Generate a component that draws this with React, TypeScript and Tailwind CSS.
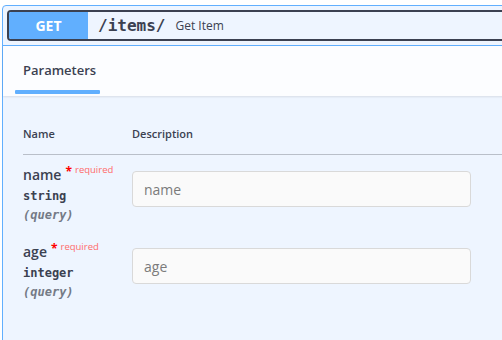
import React from "react";

const sans = { fontFamily: '"Open Sans", "Noto Sans", sans-serif' };

interface Param {
  name: string;
  type: string;
  where: string;
}

const params: Param[] = [
  { name: "name", type: "string", where: "query" },
  { name: "age", type: "integer", where: "query" },
];

function ParamRow({ p }: { p: Param }) {
  return (
    <div className="flex pt-[10px] h-[77px]">
      <div className="w-[109px] shrink-0">
        <div className="flex items-start h-[20px] leading-[20px]">
          <span className="text-[14px] font-semibold text-[#3b4151]">{p.name}</span>
          <span className="ml-[4px] text-[12px] leading-[14px] font-bold text-[#ff0000]">*</span>
          <span className="ml-[3px] text-[9.5px] leading-[12px] text-[#ff6b6b] -mt-[1px]">required</span>
        </div>
        <div className="mt-[4px] text-[12px] leading-[14px] font-bold text-[#3b4151] font-['DejaVu_Sans_Mono',monospace]">
          {p.type}
        </div>
        <div className="mt-[5px] text-[12px] leading-[14px] italic font-semibold text-[#747a86] font-['DejaVu_Sans_Mono',monospace]">
          ({p.where})
        </div>
      </div>
      <div className="pt-[6px]">
        <input
          placeholder={p.name}
          className="w-[339px] h-[36px] rounded-[4px] border border-[#d9d9d9] bg-[#fafafa] px-[11px] text-[14px] text-[#3b4151] placeholder:text-[#7b7b7b] outline-none"
          style={sans}
        />
      </div>
    </div>
  );
}

export default function App() {
  return (
    <div className="w-[502px] h-[340px] overflow-hidden bg-white pt-[5px] pl-[2px]" style={sans}>
      <div className="w-[560px] h-[360px] border border-[#61affe] rounded-[4px] bg-[#eef5ff]">
        {/* Summary */}
        <div className="p-[4px] border-b border-[#61affe]">
          <div className="flex items-center h-[31px] border-2 border-[#3b4151] rounded-[4px] overflow-hidden">
            <div className="w-[79px] h-full bg-[#61affe] flex items-center justify-center text-white font-bold text-[14px]">
              GET
            </div>
            <span className="ml-[10px] text-[16px] font-bold text-[#3b4151] font-['DejaVu_Sans_Mono',monospace]">
              /items/
            </span>
            <span className="ml-[10px] text-[12px] text-[#3b4151]">Get Item</span>
          </div>
        </div>

        {/* Tab header */}
        <div className="h-[50px] bg-[#fcfdff] shadow-[0_1px_2px_rgba(0,0,0,0.1)] px-[12px] pt-[14px]">
          <div className="w-[85px] flex flex-col">
            <span className="pl-[8px] text-[13px] leading-[20px] font-semibold text-[#3b4151]">Parameters</span>
            <div className="mt-[10px] h-[4px] bg-[#61affe] rounded-[1px]" />
          </div>
        </div>

        {/* Table */}
        <div className="pl-[20px] pt-[30px]">
          <div className="flex border-b border-[#b9bfc9] pb-[12px] text-[11px] leading-[16px] font-semibold text-[#3b4151]">
            <div className="w-[109px]">Name</div>
            <div>Description</div>
          </div>
          {params.map((p) => (
            <ParamRow key={p.name} p={p} />
          ))}
        </div>
      </div>
    </div>
  );
}
